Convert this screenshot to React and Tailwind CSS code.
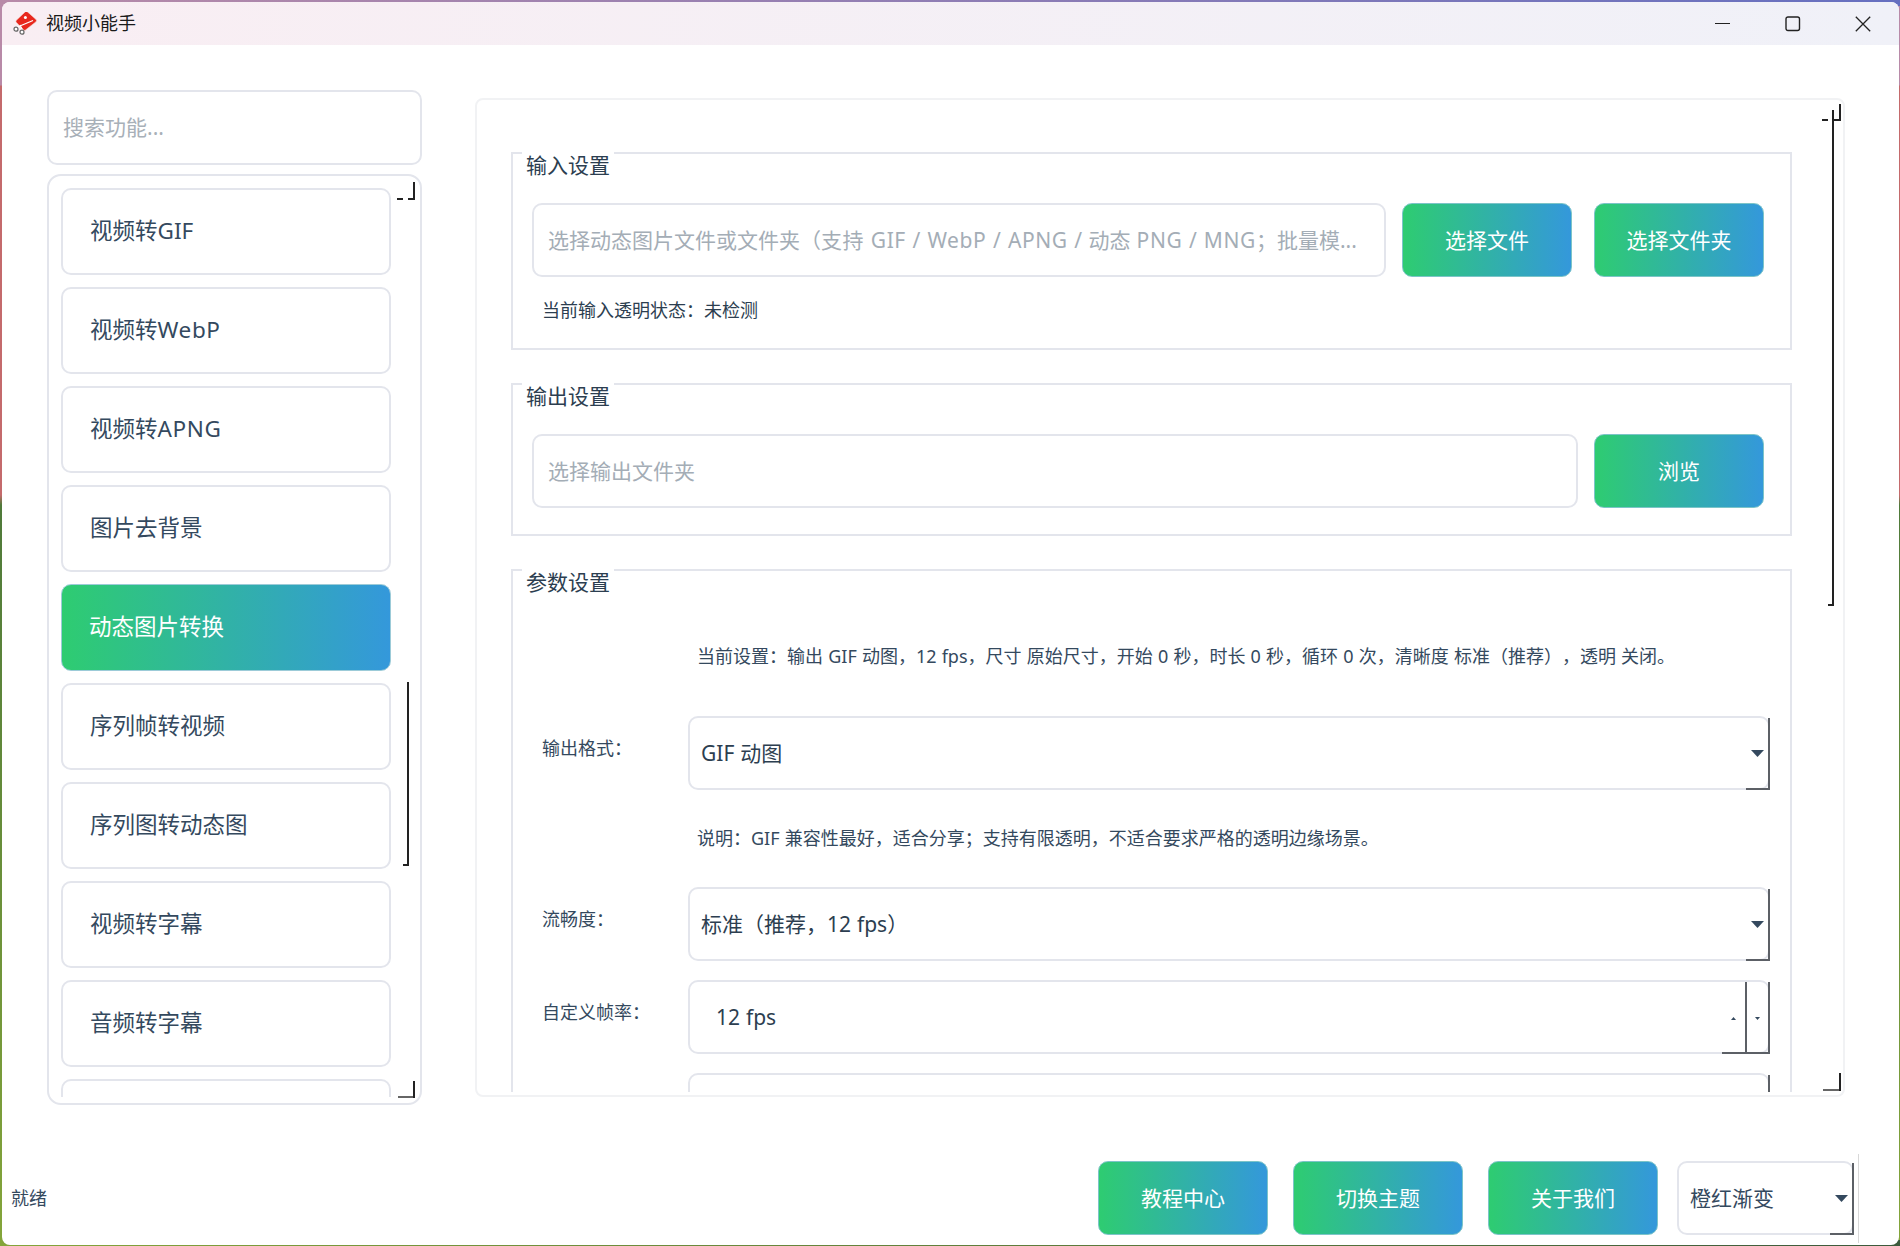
const font = "[font-family:'Noto_Sans','Noto_Sans_CJK_SC',sans-serif]";

const Latin = ({ children }) => <span className="tracking-[0.6px]">{children}</span>;

const navItems = [
  <>视频转GIF</>,
  <>视频转<Latin>WebP</Latin></>,
  <>视频转<Latin>APNG</Latin></>,
  <>图片去背景</>,
  <>动态图片转换</>,
  <>序列帧转视频</>,
  <>序列图转动态图</>,
  <>视频转字幕</>,
  <>音频转字幕</>,
  "",
];

const Logo = () => (
  <svg width="24" height="24" viewBox="0 0 24 24" className="shrink-0">
    <path d="M12.5 -.4 Q13.6 -1 14.6 0 L23 7.4 Q24 8.6 23 9.8 L12.5 18 Q11.4 18.8 10.4 17.8 L3.4 10.4 Q2.4 9.2 3.4 8.2 Z" fill="#e8281e" stroke="#f3d6d0" strokeWidth=".6" />
    <circle cx="12.4" cy="5.4" r="1.5" fill="#fff" />
    <path d="M4.5 15 L20 8.5 M9.5 18 L7 13" stroke="#fff" strokeWidth="1.2" />
    <circle cx="3" cy="17.2" r="2" fill="#fff" stroke="#666" strokeWidth="1.2" />
    <circle cx="9" cy="20.2" r="2" fill="#fff" stroke="#666" strokeWidth="1.2" />
  </svg>
);

const GradientButton = ({ children, className = "" }) => (
  <div className={`flex h-[74px] w-[170px] shrink-0 items-center justify-center rounded-[10px] border border-[#7cc4c8] bg-[linear-gradient(90deg,#2ecc71,#3498db)] pt-[1px] text-[21px] text-white ${className}`}>
    {children}
  </div>
);

const Arrow = ({ className = "" }) => (
  <svg width="13" height="7" viewBox="0 0 13 7" className={`absolute ${className}`}>
    <polygon points="0,0 13,0 6.5,7" fill="#34495e" />
  </svg>
);

// the stray native frame lines on combo boxes
const FrameLines = ({ width = 24 }) => (
  <>
    <span className="absolute -right-[2px] top-0 -bottom-[2px] w-[2px] bg-[#5c6066]" />
    <span className="absolute -right-[2px] -bottom-[2px] h-[2px] bg-[#5c6066]" style={{ width }} />
  </>
);

const Select = ({ children }) => (
  <div className="relative flex h-[74px] w-[1082px] items-center rounded-[10px] border-2 border-[#e3e5ec] pl-[11px] pt-[2px] text-[21px] text-[#2c3e50]">
    {children}
    <Arrow className="right-[4px] top-[32px]" />
    <FrameLines />
  </div>
);

const GroupBox = ({ title, className = "", children }) => (
  <div className={`relative w-[1281px] shrink-0 border-2 border-[#e3e5ec] ${className}`}>
    <div className="absolute left-[9px] -top-[2px] bg-white px-[4px] text-[21px] leading-[26px] text-[#2c3e50]">{title}</div>
    {children}
  </div>
);

const Field = ({ children, className = "" }) => (
  <div className={`flex h-[74px] items-center rounded-[10px] border-2 border-[#e3e5ec] pl-[14px] pt-[1px] text-[21px] whitespace-pre text-[#a4adb6] ${className}`}>
    {children}
  </div>
);

const Label = ({ children }) => (
  <div className="mt-[20px] w-[175px] shrink-0 pl-[29px] text-[18px] leading-[24px] whitespace-nowrap text-[#34495e]">{children}</div>
);

export default function App() {
  return (
    <div className={`h-[1246px] w-[1900px] overflow-hidden pl-[2px] pt-[2px] [text-spacing-trim:space-all] [word-spacing:0.5px] ${font} [background:linear-gradient(90deg,#b88aa8,#6670c0)_top/100%_6px_no-repeat,linear-gradient(90deg,#84a53a,#3c5a3c)_bottom/100%_6px_no-repeat,linear-gradient(180deg,#b88aa8_85px,#c46a6c_86px,#c46a6c_495px,#4f7a3a_505px,#84a53a_100%)]`}>
      <div className="flex h-[1243px] w-[1897px] flex-col overflow-hidden rounded-[8px] bg-white">
        {/* title bar */}
        <div className="flex h-[43px] shrink-0 items-center bg-[linear-gradient(90deg,#f9eef3,#f0f1f8)] pl-[11px] pr-[1px]">
          <Logo />
          <span className="ml-[9px] text-[18px] text-[#1a1a1a]">视频小能手</span>
          <div className="ml-auto flex">
            <div className="flex h-[43px] w-[70px] items-center justify-center">
              <svg width="16" height="16" viewBox="0 0 16 16"><path d="M0 7.5H15" stroke="#222" strokeWidth="1.2" /></svg>
            </div>
            <div className="flex h-[43px] w-[70px] items-center justify-center">
              <svg width="16" height="16" viewBox="0 0 16 16"><rect x="1" y="1" width="13.5" height="13.5" rx="2" fill="none" stroke="#222" strokeWidth="1.4" /></svg>
            </div>
            <div className="flex h-[43px] w-[70px] items-center justify-center">
              <svg width="16" height="16" viewBox="0 0 16 16"><path d="M.8.8L15.2 15.2M15.2.8L.8 15.2" stroke="#222" strokeWidth="1.3" /></svg>
            </div>
          </div>
        </div>

        {/* body */}
        <div className="flex items-start pl-[45px] pt-[45px]">
          <div className="flex w-[375px] shrink-0 flex-col gap-[9px]">
            <div className="flex h-[75px] items-center rounded-[10px] border-2 border-[#e3e5ec] pl-[14px] text-[21px] text-[#a8b0b8]">搜索功能...</div>
            <div className="relative h-[931px] rounded-[14px] border-2 border-[#e3e5ec] pl-[12px] pt-[12px]">
              <div className="flex h-[909px] flex-col gap-[12px] overflow-hidden">
                {navItems.map((name, idx) =>
                  idx === 4 ? (
                    <div key={idx} className="flex h-[87px] w-[330px] shrink-0 items-center rounded-[10px] border border-[#9ccbd8] bg-[linear-gradient(90deg,#2ecc71,#3498db)] pb-[2px] pl-[27px] text-[22.5px] text-white">
                      {name}
                    </div>
                  ) : (
                    <div key={idx} className="flex h-[87px] w-[330px] shrink-0 items-center rounded-[10px] border-2 border-[#e3e5ec] pb-[2px] pl-[27px] text-[22.5px] text-[#34495e]">
                      {name}
                    </div>
                  ),
                )}
              </div>
              {/* native scrollbar remnants */}
              <span className="absolute left-[348px] top-[22px] h-[2px] w-[6px] bg-[#222]" />
              <span className="absolute left-[359px] top-[22px] h-[2px] w-[7px] bg-[#222]" />
              <span className="absolute left-[364px] top-[6px] h-[18px] w-[2px] bg-[#222]" />
              <span className="absolute left-[358px] top-[506px] h-[184px] w-[2px] bg-[#222]" />
              <span className="absolute left-[354px] top-[688px] h-[2px] w-[5px] bg-[#222]" />
              <span className="absolute left-[349px] top-[920px] h-[2px] w-[16px] bg-[#666]" />
              <span className="absolute left-[364px] top-[905px] h-[17px] w-[2px] bg-[#222]" />
            </div>
          </div>

          {/* settings panel */}
          <div className="relative ml-[53px] mt-[8px] h-[999px] w-[1370px] shrink-0 rounded-[8px] border-2 border-[#f1f2f4]">
            <div className="flex h-[992px] flex-col gap-[33px] overflow-hidden pl-[34px] pt-[52px]">
              <GroupBox title="输入设置" className="h-[198px] pl-[19px] pt-[49px]">
                <div className="flex">
                  <Field className="w-[854px]">选择动态图片文件或文件夹（<Latin>支持 GIF / WebP / APNG /</Latin> 动态 <Latin>PNG / MNG</Latin>；批量模...</Field>
                  <GradientButton className="ml-[16px]">选择文件</GradientButton>
                  <GradientButton className="ml-[22px]">选择文件夹</GradientButton>
                </div>
                <div className="ml-[10px] mt-[21px] text-[18px] leading-[24px] text-[#2c3e50]">当前输入透明状态：未检测</div>
              </GroupBox>

              <GroupBox title="输出设置" className="h-[153px] pl-[19px] pt-[49px]">
                <div className="flex">
                  <Field className="w-[1046px]">选择输出文件夹</Field>
                  <GradientButton className="ml-[16px]">浏览</GradientButton>
                </div>
              </GroupBox>

              <GroupBox title="参数设置" className="h-[900px] pt-[73px]">
                <div className="ml-[184px] text-[18px] leading-[24px] whitespace-nowrap text-[#34495e]">
                  当前设置：输出 GIF 动图，12 fps，尺寸 原始尺寸，开始 0 秒，时长 0 秒，循环 0 次，清晰度 标准（推荐），透明 关闭。
                </div>
                <div className="mt-[48px] flex">
                  <Label>输出格式：</Label>
                  <Select>GIF 动图</Select>
                </div>
                <div className="ml-[184px] mt-[36px] text-[18px] leading-[24px] whitespace-nowrap text-[#34495e]">
                  说明：GIF 兼容性最好，适合分享；支持有限透明，不适合要求严格的透明边缘场景。
                </div>
                <div className="mt-[37px] flex">
                  <Label>流畅度：</Label>
                  <Select>标准（推荐，12 fps）</Select>
                </div>
                <div className="mt-[19px] flex">
                  <Label>自定义帧率：</Label>
                  <div className="relative flex h-[74px] w-[1082px] items-center rounded-[10px] border-2 border-[#e3e5ec] pl-[26px] pt-[2px] text-[21px] text-[#2c3e50]">
                    12 fps
                    <span className="absolute left-[1055px] top-0 -bottom-[2px] w-[2px] bg-[#5c6066]" />
                    <svg width="5" height="3" viewBox="0 0 5 3" className="absolute left-[1041px] top-[35px]"><polygon points="2.5,0 5,3 0,3" fill="#34495e" /></svg>
                    <svg width="5" height="3" viewBox="0 0 5 3" className="absolute left-[1065px] top-[35px]"><polygon points="0,0 5,0 2.5,3" fill="#34495e" /></svg>
                    <FrameLines width={48} />
                  </div>
                </div>
                <div className="ml-[175px] mt-[19px] flex">
                  <div className="relative h-[74px] w-[1082px] rounded-[10px] border-2 border-[#e3e5ec]">
                    <FrameLines />
                  </div>
                </div>
              </GroupBox>
            </div>
            {/* native scrollbar remnants */}
            <span className="absolute left-[1345px] top-[19px] h-[2px] w-[6px] bg-[#222]" />
            <span className="absolute left-[1356px] top-[19px] h-[2px] w-[7px] bg-[#222]" />
            <span className="absolute left-[1362px] top-[4px] h-[17px] w-[2px] bg-[#222]" />
            <span className="absolute left-[1355px] top-[10px] h-[496px] w-[2px] bg-[#222]" />
            <span className="absolute left-[1351px] top-[504px] h-[2px] w-[5px] bg-[#222]" />
            <span className="absolute left-[1346px] top-[989px] h-[2px] w-[17px] bg-[#666]" />
            <span className="absolute left-[1362px] top-[973px] h-[18px] w-[2px] bg-[#222]" />
          </div>
        </div>

        {/* bottom bar */}
        <div className="mt-[56px] flex h-[74px] items-center pl-[9px] pr-[45px]">
          <span className="text-[18px] text-[#34495e]">就绪</span>
          <div className="ml-auto flex gap-[25px]">
            <GradientButton>教程中心</GradientButton>
            <GradientButton>切换主题</GradientButton>
            <GradientButton>关于我们</GradientButton>
          </div>
          <div className="relative ml-[19px] flex h-[74px] w-[177px] items-center rounded-[10px] border-2 border-[#e3e5ec] pl-[11px] pt-[2px] text-[21px] text-[#34495e]">
            橙红渐变
            <Arrow className="right-[4px] top-[32px]" />
            <FrameLines />
            <span className="absolute -right-[7px] -top-[9px] h-[89px] w-[1px] bg-[#d8d8d8]" />
          </div>
        </div>
      </div>
    </div>
  );
}
